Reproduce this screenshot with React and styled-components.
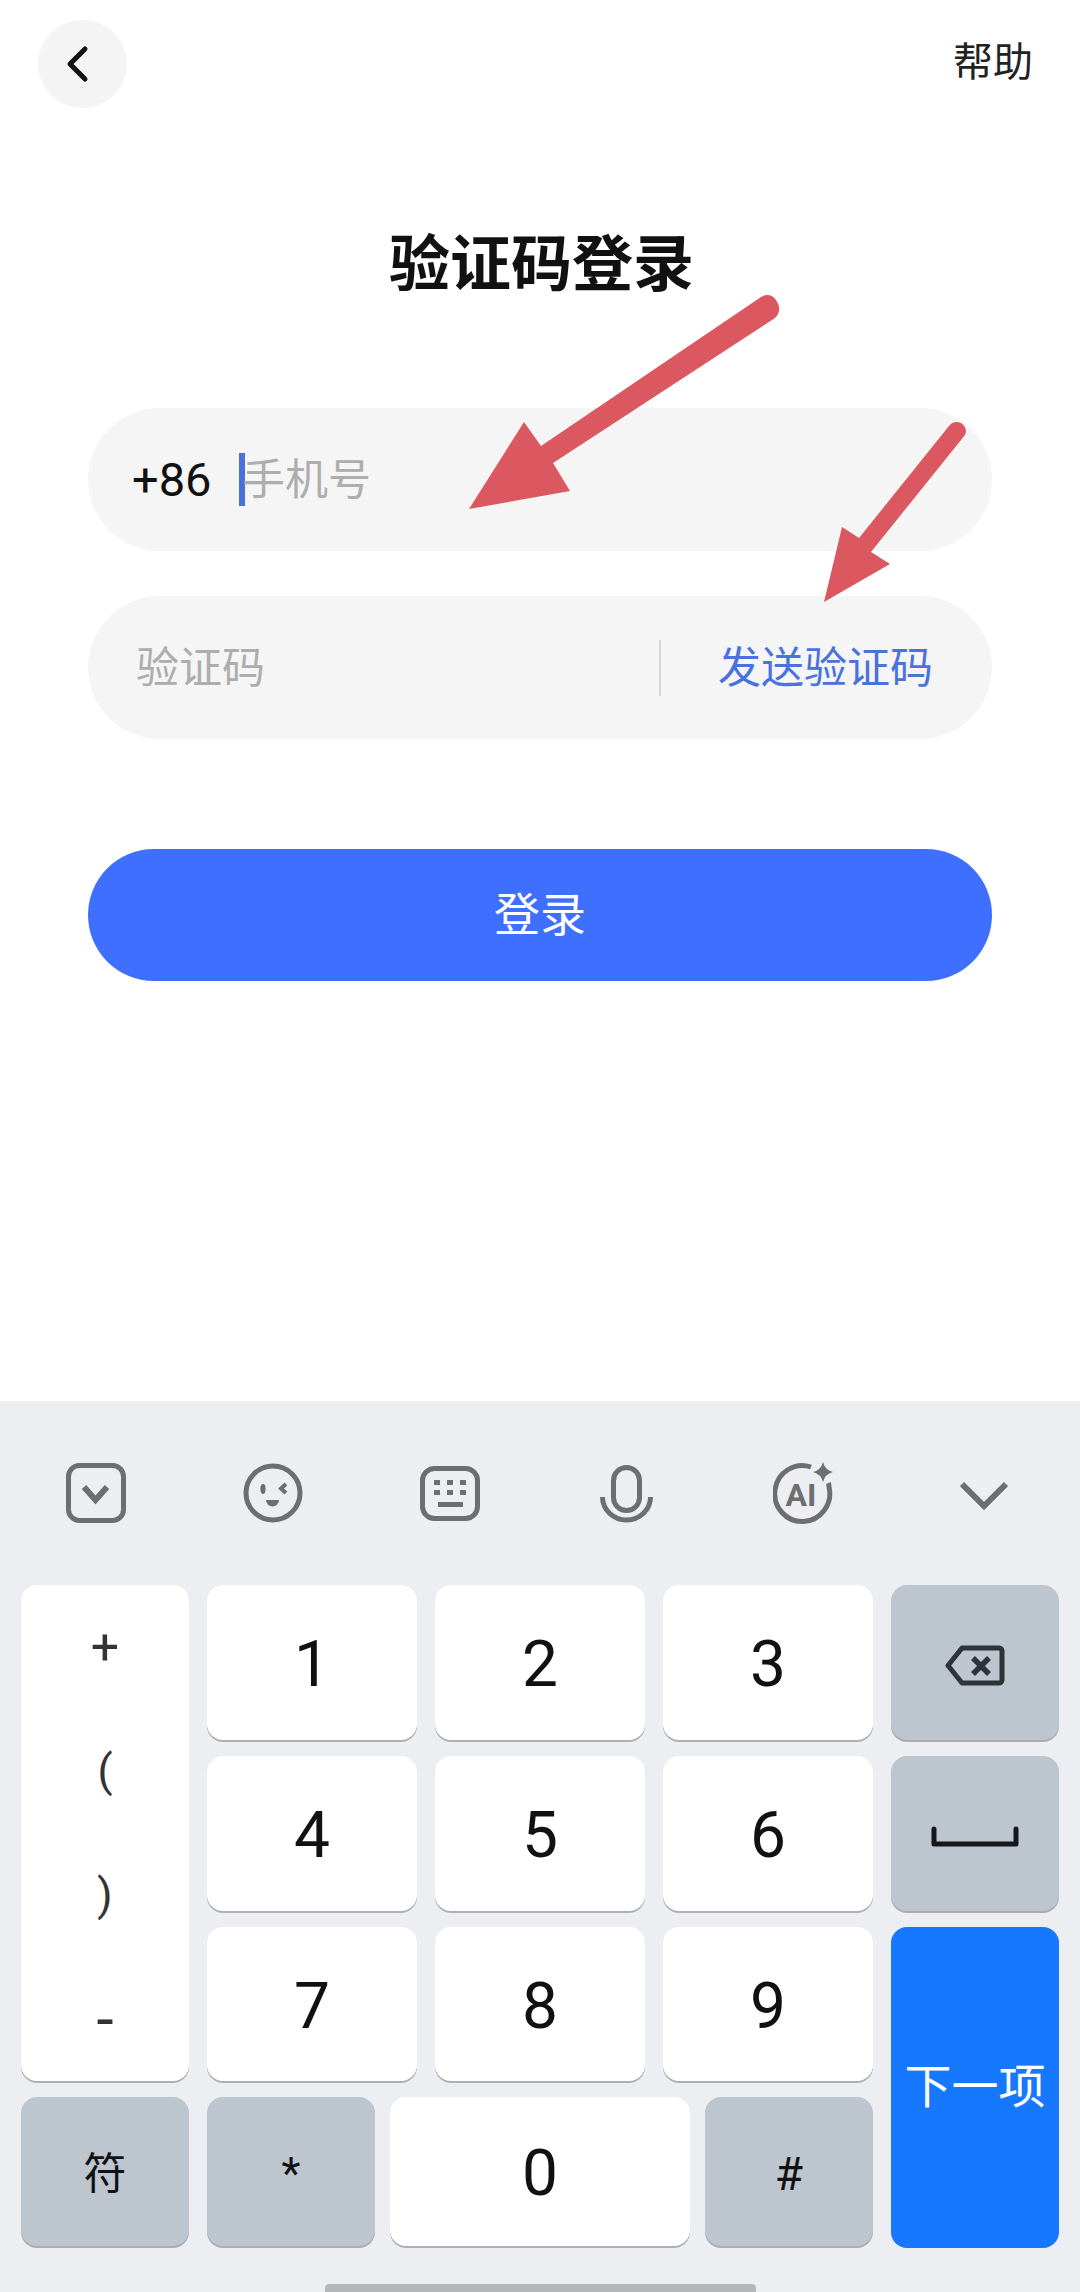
import React from 'react';
import styled, { createGlobalStyle } from 'styled-components';

const GlobalStyle = createGlobalStyle`
  html, body {
    margin: 0;
    padding: 0;
    background: #fff;
  }
  * {
    box-sizing: border-box;
  }
`;

const Page = styled.div`
  position: relative;
  display: flex;
  flex-direction: column;
  width: 1080px;
  height: 2292px;
  overflow: hidden;
  background: #fff;
  font-family: Roboto, "Noto Sans CJK SC", sans-serif;
`;

const Header = styled.header`
  display: flex;
  align-items: center;
  justify-content: space-between;
  padding: 20px 47px 0 38px;
`;

const BackButton = styled.div`
  display: flex;
  align-items: center;
  justify-content: center;
  width: 89px;
  height: 88px;
  border-radius: 50%;
  background: #f4f4f4;
  padding-right: 10px;
`;

const Help = styled.div`
  font-size: 40px;
  line-height: 44px;
  color: #222;
  margin-top: -2px;
`;

const Title = styled.h1`
  margin: 127px 0 0;
  padding-left: 3px;
  font-size: 61px;
  line-height: 60px;
  font-weight: 700;
  text-align: center;
  color: #111;
`;

const Form = styled.div`
  display: flex;
  flex-direction: column;
  gap: 45px;
  margin: 113px 88px 0 88px;
`;

const Field = styled.div`
  display: flex;
  align-items: center;
  height: 143px;
  border-radius: 72px;
  background: #f5f5f5;
  padding: 0 ${(p) => p.$right || 0}px 0 ${(p) => p.$left}px;
`;

const Prefix = styled.span`
  font-size: 47px;
  line-height: 50px;
  color: #111;
  width: 107px;
`;

const Caret = styled.i`
  display: block;
  width: 6px;
  height: 53px;
  background: #4a70dc;
`;

const Placeholder = styled.span`
  flex: ${(p) => (p.$grow ? 1 : 'none')};
  font-size: 43px;
  line-height: 50px;
  color: #adadad;
  margin-left: ${(p) => p.$shift || 0}px;
`;

const Divider = styled.i`
  display: block;
  width: 2px;
  height: 56px;
  background: #d6d6d6;
  margin-right: 57px;
`;

const SendCode = styled.span`
  font-size: 43px;
  line-height: 50px;
  color: #4a72dc;
`;

const LoginButton = styled.div`
  display: flex;
  align-items: center;
  justify-content: center;
  height: 132px;
  margin: 110px 88px 0;
  border-radius: 66px;
  background: #3f6ffe;
  color: #fff;
  font-size: 46px;
  line-height: 50px;
`;

const Keyboard = styled.section`
  margin-top: auto;
  height: 891px;
  background: #eceef1;
  display: flex;
  flex-direction: column;
`;

const Toolbar = styled.div`
  display: grid;
  grid-template-columns: repeat(6, 177px);
  height: 184px;
  padding: 60px 0 0 7px;
  color: #6d6e70;
`;

const ToolCell = styled.div`
  display: flex;
  justify-content: center;
  align-items: flex-start;
  padding-top: ${(p) => p.$top || 0}px;
  margin-left: ${(p) => p.$shift || 0}px;
`;

const Keys = styled.div`
  display: grid;
  grid-template-columns: 168px 210px 210px 210px 168px;
  grid-template-rows: 155px 155px 154px 149px;
  gap: 16px 18px;
  padding: 0 21px;
`;

const toneBg = { white: '#fff', gray: '#bdc5ce', blue: '#1677ff' };
const toneEdge = { white: '#aeb1b4', gray: '#a9adb1', blue: '#1677ff' };

const Key = styled.div`
  display: flex;
  align-items: center;
  justify-content: center;
  padding-top: 5px;
  border-radius: 16px;
  background: ${(p) => toneBg[p.$tone || 'white']};
  box-shadow: 0 2px 0 ${(p) => toneEdge[p.$tone || 'white']};
  color: ${(p) => (p.$tone === 'blue' ? '#fff' : '#111')};
  font-size: ${(p) => p.$size || 64}px;
  line-height: 1;
`;

const SymbolKey = styled(Key)`
  grid-row: 1 / 4;
  flex-direction: column;
  padding-top: 0;
  color: #333;
`;

const SymbolSlot = styled.span`
  flex: 1;
  display: flex;
  align-items: center;
  font-size: ${(p) => p.$size || 44}px;
`;

const EnterKey = styled(Key)`
  grid-column: 5;
  grid-row: 3 / 5;
  padding-top: 0;
`;

const BottomMid = styled.div`
  grid-column: 2 / 5;
  display: grid;
  grid-template-columns: 168px 300px 168px;
  gap: 15px;
`;

const HomeBar = styled.div`
  width: 431px;
  height: 8px;
  margin: auto auto 0;
  border-radius: 4px 4px 0 0;
  background: #b5b7bb;
`;

const ArrowLayer = styled.svg`
  position: absolute;
  top: 0;
  left: 0;
  pointer-events: none;
`;

const Icon = ({ w, h, children }) => (
  <svg width={w} height={h} viewBox={`0 0 ${w} ${h}`} fill="none" stroke="currentColor" strokeWidth="5">
    {children}
  </svg>
);

const digits = [['1', '2', '3'], ['4', '5', '6'], ['7', '8', '9']];

export default function App() {
  return (
    <Page>
      <GlobalStyle />
      <Header>
        <BackButton>
          <svg width="24" height="38" viewBox="0 0 24 38" fill="none" stroke="#111" strokeWidth="5" strokeLinecap="round" strokeLinejoin="round">
            <path d="M19 4 4 19l15 15" />
          </svg>
        </BackButton>
        <Help>帮助</Help>
      </Header>

      <Title>验证码登录</Title>

      <Form>
        <Field $left={44}>
          <Prefix>+86</Prefix>
          <Caret />
          <Placeholder $shift={-3}>手机号</Placeholder>
        </Field>
        <Field $left={48} $right={59}>
          <Placeholder $grow>验证码</Placeholder>
          <Divider />
          <SendCode>发送验证码</SendCode>
        </Field>
      </Form>

      <LoginButton>登录</LoginButton>

      <Keyboard>
        <Toolbar>
          <ToolCell $top={2}>
            <Icon w={60} h={60}>
              <rect x="2.5" y="2.5" width="55" height="55" rx="11" />
              <path d="M18 24l11.5 13L41 24" strokeWidth="6" />
            </Icon>
          </ToolCell>
          <ToolCell $top={2}>
            <Icon w={60} h={60}>
              <circle cx="30" cy="30" r="27" />
              <ellipse cx="20" cy="26" rx="2.6" ry="5" fill="currentColor" stroke="none" />
              <path d="M43 21l-5 4.5 5 4.5" strokeWidth="4" />
              <path d="M23 37h13a6.5 6.5 0 0 1-13 0z" fill="currentColor" stroke="none" />
            </Icon>
          </ToolCell>
          <ToolCell $top={5}>
            <Icon w={60} h={55}>
              <rect x="2.5" y="2.5" width="55" height="50" rx="12" />
              <g fill="currentColor" stroke="none">
                <rect x="14" y="14" width="6" height="5" />
                <rect x="27" y="14" width="6" height="5" />
                <rect x="40" y="14" width="6" height="5" />
                <rect x="14" y="24" width="6" height="5" />
                <rect x="27" y="24" width="6" height="5" />
                <rect x="40" y="24" width="6" height="5" />
                <rect x="18" y="36" width="25" height="5" />
              </g>
            </Icon>
          </ToolCell>
          <ToolCell $top={4}>
            <Icon w={53} h={58}>
              <rect x="13.5" y="2.5" width="26" height="43" rx="13" />
              <path d="M2.5 32a24 23 0 0 0 48 0" />
            </Icon>
          </ToolCell>
          <ToolCell>
            <Icon w={62} h={64}>
              <path d="M38 6A27.5 28 0 1 0 56 26c0-1-.2-3-.6-4" />
              <path d="M50 1Q52 9 60 11 52 13 50 21 48 13 40 11 48 9 50 1z" fill="currentColor" stroke="none" />
              <text x="28" y="45" textAnchor="middle" fontFamily="Roboto, sans-serif" fontWeight="700" fontSize="32" fill="currentColor" stroke="none">AI</text>
            </Icon>
          </ToolCell>
          <ToolCell $top={20} $shift={7}>
            <Icon w={48} h={30}>
              <path d="M2 3l22 22L46 3" strokeWidth="6" />
            </Icon>
          </ToolCell>
        </Toolbar>

        <Keys>
          <SymbolKey>
            <SymbolSlot $size={50}>+</SymbolSlot>
            <SymbolSlot>(</SymbolSlot>
            <SymbolSlot>)</SymbolSlot>
            <SymbolSlot $size={62}>-</SymbolSlot>
          </SymbolKey>
          {digits[0].map((d) => <Key key={d}>{d}</Key>)}
          <Key $tone="gray">
            <svg width="60" height="41" viewBox="0 0 60 41" fill="none" stroke="#2e3338" strokeWidth="5" strokeLinejoin="round">
              <path d="M17 3H54a3 3 0 0 1 3 3V35a3 3 0 0 1-3 3H17L3 20.5z" />
              <path d="M28 13l16 16M44 13 28 29" strokeWidth="5.5" />
            </svg>
          </Key>
          {digits[1].map((d) => <Key key={d}>{d}</Key>)}
          <Key $tone="gray">
            <svg width="88" height="21" viewBox="0 0 88 21" fill="none" stroke="#14161a" strokeWidth="5" strokeLinecap="round" strokeLinejoin="round">
              <path d="M3 3v15h82V3" />
            </svg>
          </Key>
          {digits[2].map((d) => <Key key={d}>{d}</Key>)}
          <EnterKey $tone="blue" $size={47}>下一项</EnterKey>
          <Key $tone="gray" $size={43}>符</Key>
          <BottomMid>
            <Key $tone="gray" $size={44}>*</Key>
            <Key>0</Key>
            <Key $tone="gray" $size={46}>#</Key>
          </BottomMid>
        </Keys>
        <HomeBar />
      </Keyboard>

      <ArrowLayer width="1080" height="700" viewBox="0 0 1080 700" fill="#dc5860">
        <path d="M469 509 524 422 541 446 761 297Q770 292 776 300 783 310 775 318L553 463 570 491z" />
        <path d="M824 602 842 527 859 538 949 426Q954 420 961 423 968 428 965 435L871 552 890 564z" />
      </ArrowLayer>
    </Page>
  );
}
